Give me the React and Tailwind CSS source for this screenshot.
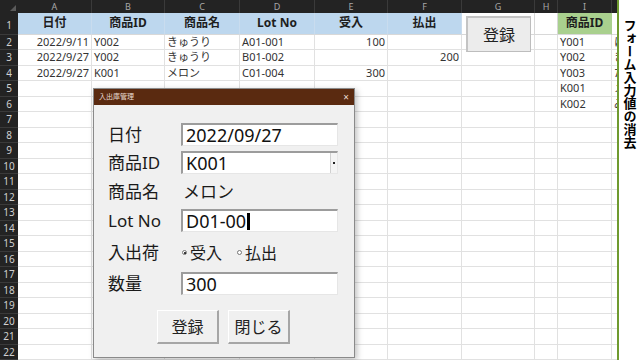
const cols = [
  { key: 'A', w: 74 },
  { key: 'B', w: 73 },
  { key: 'C', w: 75 },
  { key: 'D', w: 75 },
  { key: 'E', w: 73 },
  { key: 'F', w: 74 },
  { key: 'G', w: 73 },
  { key: 'H', w: 23 },
  { key: 'I', w: 54 },
  { key: 'J', w: 40 },
];

const widths = ['w-[74px]', 'w-[73px]', 'w-[75px]', 'w-[75px]', 'w-[73px]', 'w-[74px]', 'w-[73px]', 'w-[23px]', 'w-[54px]', 'w-[40px]'];

// [text, align]
const rows = [
  [['2022/9/11', 'r'], ['Y002'], ['きゅうり'], ['A01-001'], ['100', 'r'], [''], [''], [''], ['Y001'], ['に']],
  [['2022/9/27', 'r'], ['Y002'], ['きゅうり'], ['B01-002'], [''], ['200', 'r'], [''], [''], ['Y002'], ['き']],
  [['2022/9/27', 'r'], ['K001'], ['メロン'], ['C01-004'], ['300', 'r'], [''], [''], [''], ['Y003'], ['た']],
  [[''], [''], [''], [''], [''], [''], [''], [''], ['K001'], ['メ']],
  [[''], [''], [''], [''], [''], [''], [''], [''], ['K002'], ['み']],
];

const headers = ['日付', '商品ID', '商品名', 'Lot No', '受入', '払出', '', '', '商品ID', ''];

const jp = { fontFamily: '"Noto Sans", "Noto Sans CJK JP", sans-serif' };

function Sheet() {
  const allRows = [];
  for (let i = 0; i < 21; i++) allRows.push(rows[i] || null);

  return (
    <div className="flex flex-col w-[617px] overflow-hidden" style={jp}>
      {/* column letters */}
      <div className="flex h-[13px] bg-[#232323]">
        <div className="w-[18px] shrink-0 relative">
          <div className="absolute right-[2px] bottom-[2px] w-0 h-0 border-l-[6px] border-l-transparent border-b-[6px] border-b-[#5a5a5a]" />
        </div>
        {cols.map((c, i) => (
          <div key={c.key} className={`${widths[i]} shrink-0 border-r border-[#3a3a3a] text-[9px] leading-[13px] text-center text-[#a8a8a8]`}>
            {c.key === 'J' ? '' : c.key}
          </div>
        ))}
      </div>

      {/* row 1 */}
      <div className="flex h-[24px]">
        <div className="w-[18px] shrink-0 bg-[#232323] text-[#d0d0d0] text-[10px] flex items-end justify-center pb-[1px] border-b border-[#3a3a3a]">1</div>
        {headers.map((h, i) => (
          <div
            key={i}
            className={`${widths[i]} shrink-0 border-r border-b border-[#d8d8d8] text-[12px] font-bold text-[#1e1e1e] flex items-center justify-center ${
              i < 6 ? 'bg-[#bdd7ee] border-r-[#c9dcee]' : i === 8 ? 'bg-[#a9d08e] border-r-[#a9d08e]' : 'bg-white'
            }`}
          >
            {h}
          </div>
        ))}
      </div>

      {allRows.map((r, ri) => (
        <div key={ri} className="flex h-[15.5px] shrink-0">
          <div className="w-[18px] shrink-0 bg-[#232323] text-[#d0d0d0] text-[10px] leading-[15px] text-center border-b border-[#3a3a3a]">
            {ri + 2}
          </div>
          {cols.map((c, ci) => {
            const cell = r ? r[ci] : [''];
            return (
              <div
                key={c.key}
                className={`${widths[ci]} shrink-0 border-r border-b border-[#e1e1e1] bg-white text-[11px] leading-[14px] text-[#333] px-[2px] whitespace-nowrap overflow-hidden ${
                  cell[1] === 'r' ? 'text-right' : 'text-left'
                }`}
              >
                {cell[0]}
              </div>
            );
          })}
        </div>
      ))}
    </div>
  );
}

function Field({ children, cursor, combo }) {
  return (
    <div className="w-[157px] h-[23px] bg-white border-t-2 border-l-2 border-t-[#9c9c9c] border-l-[#9c9c9c] border-r border-b border-r-[#e6e6e6] border-b-[#e6e6e6] flex items-center pl-[3px] relative">
      <span className="text-[18px] leading-none text-[#111]">{children}</span>
      {cursor && <span className="inline-block w-[3px] h-[17px] bg-black ml-[1px]" />}
      {combo && (
        <div className="absolute right-0 top-0 bottom-0 w-[7px] border-l border-[#d0d0d0] bg-[#f4f4f4] flex items-center justify-center">
          <div className="w-[2px] h-[2px] bg-[#222]" />
        </div>
      )}
    </div>
  );
}

function Label({ children }) {
  return <div className="w-[73px] shrink-0 text-[17px] leading-none text-[#1a1a1a]">{children}</div>;
}

function Radio({ checked, children }) {
  return (
    <div className="flex items-center gap-[3px]">
      <div className="w-[5px] h-[5px] rounded-full border border-[#777] bg-white flex items-center justify-center">
        {checked && <div className="w-[2px] h-[2px] rounded-full bg-black" />}
      </div>
      <span className="text-[16px] leading-none text-[#1a1a1a]">{children}</span>
    </div>
  );
}

function Button({ children }) {
  return (
    <div className="w-[62px] h-[34px] bg-[#f0f0f0] border-t border-l border-t-white border-l-white border-r-2 border-b-2 border-r-[#a6a6a6] border-b-[#a6a6a6] flex items-center justify-center text-[16px] text-[#222]">
      {children}
    </div>
  );
}

function Dialog() {
  return (
    <div className="absolute left-[93px] top-[88px] w-[262px] h-[270px] border border-[#8a8a8a] shadow-[2px_2px_6px_rgba(0,0,0,0.25)] flex flex-col" style={jp}>
      <div className="h-[16px] bg-[#5a2a10] flex items-center justify-between px-[5px]">
        <span className="text-[7px] text-[#e8dcd3]">入出庫管理</span>
        <span className="text-[10px] text-[#e8dcd3] leading-none">×</span>
      </div>
      <div className="flex-1 bg-[#f0f0f0] pl-[14px] flex flex-col">
        <div className="flex items-center mt-[18px]">
          <Label>日付</Label>
          <Field>2022/09/27</Field>
        </div>
        <div className="flex items-center mt-[5px]">
          <Label>商品ID</Label>
          <Field combo>K001</Field>
        </div>
        <div className="flex items-center mt-[6px] h-[23px]">
          <Label>商品名</Label>
          <span className="text-[17px] leading-none text-[#1a1a1a] pl-[2px]">メロン</span>
        </div>
        <div className="flex items-center mt-[6px]">
          <Label>Lot No</Label>
          <Field cursor>D01-00</Field>
        </div>
        <div className="flex items-center mt-[9px] h-[23px]">
          <Label>入出荷</Label>
          <div className="flex items-center gap-[15px] pl-[1px]">
            <Radio checked>受入</Radio>
            <Radio>払出</Radio>
          </div>
        </div>
        <div className="flex items-center mt-[8px]">
          <Label>数量</Label>
          <Field>300</Field>
        </div>
        <div className="flex gap-[9px] mt-[15px] pl-[49px]">
          <Button>登録</Button>
          <Button>閉じる</Button>
        </div>
      </div>
    </div>
  );
}

export default function App() {
  return (
    <div className="w-[640px] h-[360px] overflow-hidden bg-white relative flex" style={jp}>
      <Sheet />
      <div className="w-[23px] shrink-0 border-l-2 border-[#6f9a2f] bg-white flex justify-center pt-[19px]">
        <div className="text-[13px] font-bold text-black leading-[18px] [writing-mode:vertical-rl]">
          フォーム入力値の消去
        </div>
      </div>

      {/* sheet button in column G */}
      <div className="absolute left-[466px] top-[16px] w-[65px] h-[36px] bg-[#ececec] border-t-2 border-l-2 border-t-[#c4c4c4] border-l-[#c4c4c4] border-r border-b border-r-[#bdbdbd] border-b-[#bdbdbd] flex items-center justify-center text-[16px] text-[#222]">
        登録
      </div>

      <Dialog />
    </div>
  );
}
